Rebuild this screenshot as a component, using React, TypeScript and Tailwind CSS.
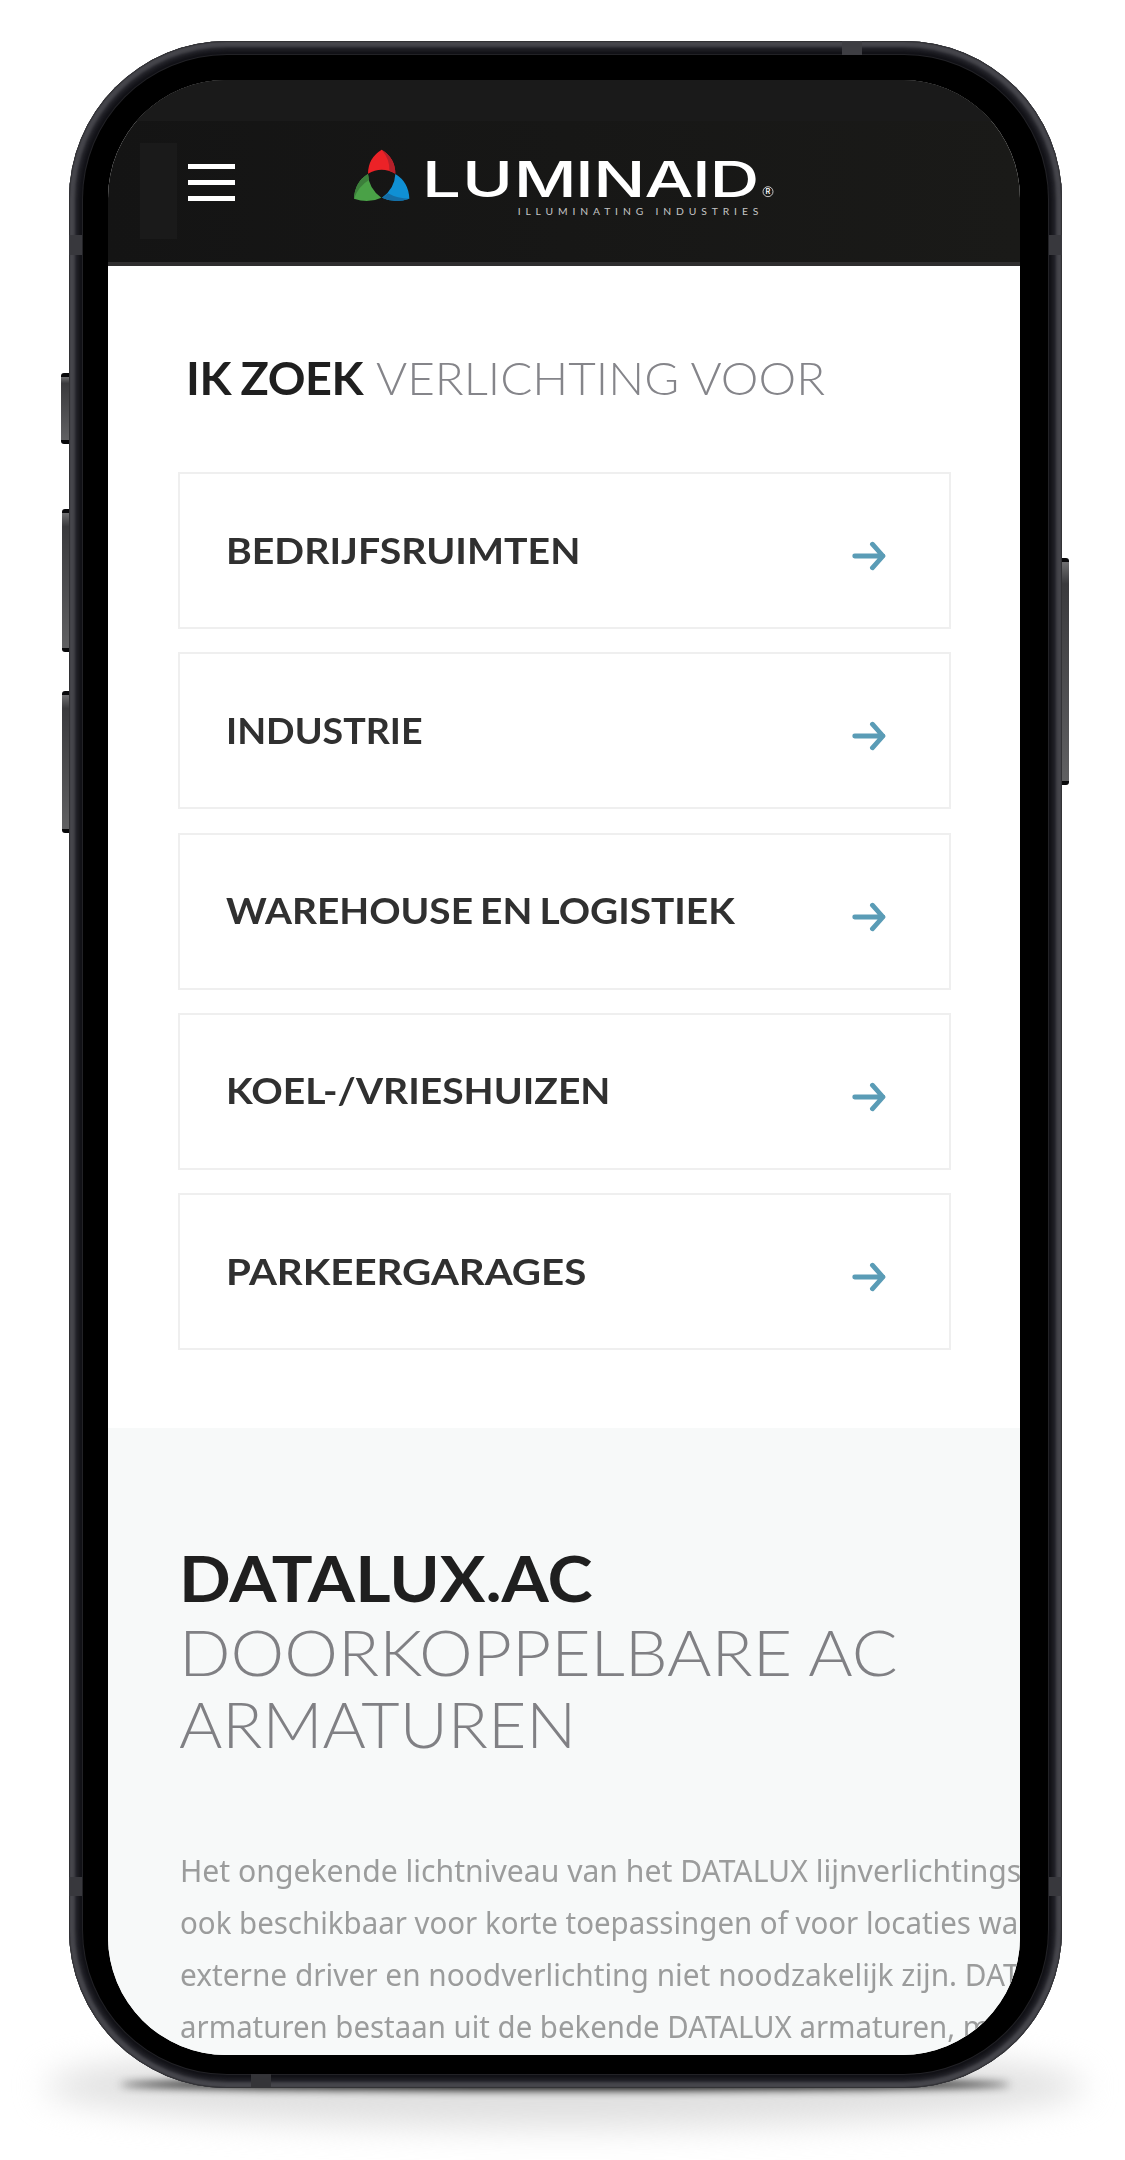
import React, { useLayoutEffect, useRef, useState } from "react";

const categories = [
  { label: "BEDRIJFSRUIMTEN", width: 354 },
  { label: "INDUSTRIE", width: 197 },
  { label: "WAREHOUSE EN LOGISTIEK", width: 509 },
  { label: "KOEL-/VRIESHUIZEN", width: 384 },
  { label: "PARKEERGARAGES", width: 360 },
];

const paragraph = [
  { text: "Het ongekende lichtniveau van het DATALUX lijnverlichtings", width: 841 },
  { text: "ook beschikbaar voor korte toepassingen of voor locaties wa", width: 838 },
  { text: "externe driver en noodverlichting niet noodzakelijk zijn. DAT", width: 840 },
  { text: "armaturen bestaan uit de bekende DATALUX armaturen, m", width: 810 },
];

/** A single line of text, condensed or extended to fill the given width. */
function FitLine({ text, width, className }: { text: string; width: number; className: string }) {
  const ref = useRef<HTMLSpanElement>(null);
  const [scale, setScale] = useState(1);
  useLayoutEffect(() => {
    if (ref.current) setScale(width / ref.current.offsetWidth);
  }, [width, text]);
  return (
    <span className="block shrink-0" style={{ width }}>
      <span
        ref={ref}
        className={`inline-block origin-left align-top whitespace-nowrap ${className}`}
        style={{ transform: `scaleX(${scale})` }}
      >
        {text}
      </span>
    </span>
  );
}

function Logo() {
  return (
    <svg className="h-[100px] w-[460px] shrink-0" viewBox="0 0 1380 300">
      <path d="M155 59Q114 84 114 131Q155 108 196 131Q196 84 155 59Z" fill="#ec2227" />
      <path d="M155 59Q196 84 196 131Q188 125 178 122Q180 88 155 59Z" fill="#b5202a" />
      <path d="M114 132Q74 156 72 206Q115 222 154 203Q116 176 114 132Z" fill="#4aa147" />
      <path d="M114 132Q74 156 72 206Q86 168 117 150Z" fill="#3c7f3b" />
      <path d="M196 132Q236 156 238 206Q195 222 156 203Q194 176 196 132Z" fill="#1090d4" />
      <path d="M238 206Q195 222 156 203Q166 198 174 190Q202 206 238 206Z" fill="#156ea6" />
      <g fill="#fff" fontFamily="Inter, sans-serif">
        <g transform="scale(1.4 1)" fontSize="148" fontWeight="500">
          <text y="200" x="197 283 394 525 564 674 776 813">LUMINAID</text>
        </g>
        <text x="563" y="256" fontSize="31" fontWeight="400" fill="#c4c4c4" textLength="722" lengthAdjust="spacing" fontFamily="Lato, sans-serif">
          ILLUMINATING INDUSTRIES
        </text>
        <circle cx="1314" cy="185" r="15" fill="none" stroke="#e5e5e5" strokeWidth="2.5" />
        <text x="1314" y="193" fontSize="22" fontWeight="600" textAnchor="middle">R</text>
      </g>
    </svg>
  );
}

function Arrow() {
  return (
    <svg className="mt-[11px] h-[30px] w-[34px]" viewBox="0 0 34 30" fill="none" stroke="#5a9cb6" strokeWidth="4.8" strokeLinecap="round" strokeLinejoin="round">
      <path d="M2.7 15H31M20.4 3.2L31 15L20.4 26.8" />
    </svg>
  );
}

function SideButton({ className }: { className: string }) {
  return (
    <span className={`absolute rounded-[3px] border-y-[4px] border-[#08080a] bg-linear-to-b from-[#707072] via-[#3a3a3d] via-10% to-[#606062] ${className}`} />
  );
}

export default function App() {
  return (
    <div className="relative flex h-[2160px] w-[1125px] overflow-hidden bg-white pt-[41px] pl-[69px]">
      <span className="absolute top-[2044px] left-[45px] h-[84px] w-[1040px] rounded-[50%] bg-[#e0e0e0] blur-[16px]" />
      <span className="absolute top-[2079px] left-[120px] h-[11px] w-[890px] rounded-[50%] bg-black blur-[4px]" />
      <SideButton className="top-[373px] left-[61px] h-[71px] w-[12px]" />
      <SideButton className="top-[509px] left-[62px] h-[143px] w-[12px]" />
      <SideButton className="top-[691px] left-[62px] h-[142px] w-[12px]" />
      <SideButton className="top-[558px] left-[1057px] h-[227px] w-[12px]" />

      <div className="relative h-[2047px] w-[993px] rounded-[158px] bg-[#111116] p-[14px] shadow-[inset_0_0_1px_1px_#303034,inset_0_0_3px_6px_#46464c,inset_0_0_3px_10px_#202026]">
        <span className="absolute top-0 left-[773px] h-[14px] w-[20px] bg-[#3e3e43]" />
        <span className="absolute bottom-[1px] left-[182px] h-[13px] w-[20px] bg-[#343438]" />
        <span className="absolute top-[194px] left-0 h-[20px] w-[13px] bg-[#38383d]" />
        <span className="absolute top-[194px] right-0 h-[20px] w-[13px] bg-[#38383d]" />
        <span className="absolute top-[1836px] left-0 h-[19px] w-[13px] bg-[#38383d]" />
        <span className="absolute top-[1836px] right-0 h-[19px] w-[13px] bg-[#38383d]" />

        <div className="h-full w-full rounded-[144px] bg-black px-[25px] pt-[25px] pb-[17px] shadow-[0_0_0_1px_#222226]">
          <main className="flex h-[1975px] w-[912px] flex-col overflow-hidden rounded-[118px] bg-white">
            <header className="h-[186px] shrink-0 border-b-4 border-[#2f2e2f] bg-linear-to-r from-[#141414] to-[#1a1a18]">
              <div className="h-[41px] bg-[#1a1a1a]" />
              <div className="flex h-[141px] items-start pl-[32px]">
                <span className="mt-[22px] h-[96px] w-[37px] bg-[#1a1a1a]" />
                <div className="mt-[43px] ml-[11px] flex w-[47px] flex-col gap-[11px]">
                  <span className="h-[5px] bg-white" />
                  <span className="h-[5px] bg-white" />
                  <span className="h-[5px] bg-white" />
                </div>
                <div className="mt-[9px] ml-[95px]">
                  <Logo />
                </div>
              </div>
            </header>

            <section className="h-[1162px] shrink-0 pt-[82px] pl-[70px]">
              <h1 className="flex h-[60px] items-center pl-[8px]">
                <FitLine text="IK ZOEK" width={177} className="font-[Lato] text-[46px] leading-[60px] font-bold tracking-[-0.01em] [word-spacing:-0.03em] text-[#1f1f1f]" />
                <span className="w-[13px]" />
                <FitLine text="VERLICHTING VOOR" width={449} className="font-[Lato] text-[46px] leading-[60px] font-light text-[#85858a]" />
              </h1>
              <div className="mt-[64px] flex w-[773px] flex-col gap-[23.3px]">
                {categories.map((item) => (
                  <a key={item.label} className="flex h-[157px] items-center justify-between border-2 border-[#efefef] bg-white pr-[63px] pl-[46px]">
                    <FitLine text={item.label} width={item.width} className="mb-[2px] font-[Lato] text-[37px] leading-[50px] font-bold [word-spacing:-0.06em] text-[#303030]" />
                    <Arrow />
                  </a>
                ))}
              </div>
            </section>

            <section className="h-[627px] shrink-0 bg-[#f7f9f9] pt-[113px] pl-[71px]">
              <h2>
                <FitLine text="DATALUX.AC" width={414} className="h-[74px] font-[Lato] text-[64px] leading-[74px] font-bold text-[#1f1f1f]" />
                <FitLine text="DOORKOPPELBARE AC" width={719} className="h-[72px] font-[Lato] text-[64px] leading-[74px] font-light text-[#808084]" />
                <FitLine text="ARMATUREN" width={397} className="h-[74px] font-[Lato] text-[64px] leading-[74px] font-light text-[#808084]" />
              </h2>
              <p className="mt-[83px] pl-[1px]">
                {paragraph.map((line) => (
                  <FitLine key={line.text} text={line.text} width={line.width} className="h-[52px] font-['Noto_Sans'] text-[31px] leading-[52px] text-[#9b9c9c]" />
                ))}
              </p>
            </section>
          </main>
        </div>
      </div>
    </div>
  );
}
